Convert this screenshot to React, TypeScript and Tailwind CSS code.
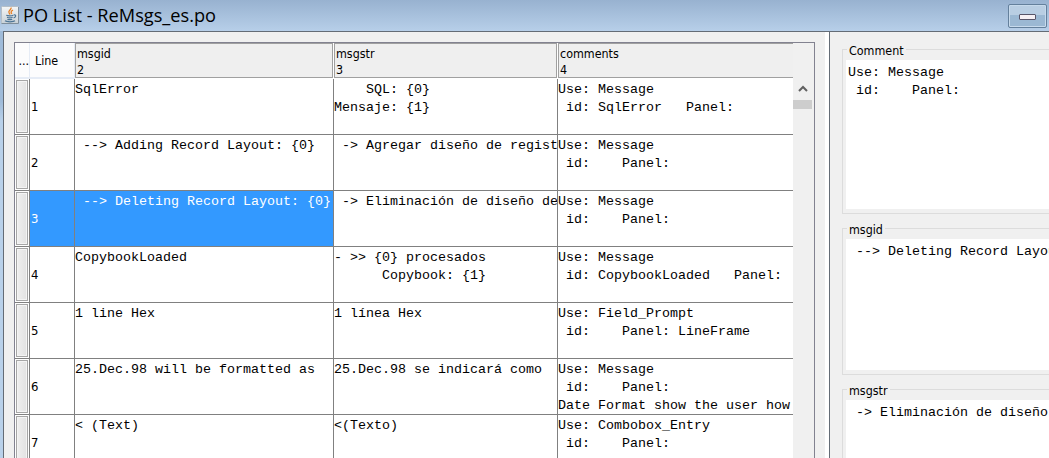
import React from "react";

type Row = { msgid: string; msgstr: string; comments: string };

const rows: Row[] = [
  { msgid: "SqlError", msgstr: "    SQL: {0}\nMensaje: {1}", comments: "Use: Message\n id: SqlError   Panel:" },
  { msgid: " --> Adding Record Layout: {0}", msgstr: " -> Agregar diseño de regist", comments: "Use: Message\n id:    Panel:" },
  { msgid: " --> Deleting Record Layout: {0}", msgstr: " -> Eliminación de diseño de", comments: "Use: Message\n id:    Panel:" },
  { msgid: "CopybookLoaded", msgstr: "- >> {0} procesados\n      Copybook: {1}", comments: "Use: Message\n id: CopybookLoaded   Panel:" },
  { msgid: "1 line Hex", msgstr: "1 línea Hex", comments: "Use: Field_Prompt\n id:    Panel: LineFrame" },
  { msgid: "25.Dec.98 will be formatted as", msgstr: "25.Dec.98 se indicará como", comments: "Use: Message\n id:    Panel:\nDate Format show the user how" },
  { msgid: "< (Text)", msgstr: "<(Texto)", comments: "Use: Combobox_Entry\n id:    Panel:" },
];

const mono = "font-['Liberation_Mono',monospace] text-[13.333px] leading-[18px] whitespace-pre";
const cols = "grid grid-cols-[15px_45px_259px_224px_235px]";
const cell = "h-full overflow-hidden border-r border-[#808080] pt-[2px]";

function JavaIcon() {
  return (
    <svg width="18" height="18" viewBox="0 0 18 18" className="shrink-0">
      <defs>
        <linearGradient id="tile" x1="0" y1="0" x2="0" y2="1">
          <stop offset="0" stopColor="#f4f6f7" />
          <stop offset="1" stopColor="#c9d1d7" />
        </linearGradient>
      </defs>
      <rect x=".5" y=".5" width="17" height="17" rx="1" fill="url(#tile)" stroke="#b4bec7" />
      <path d="M.5 17.500H17.500V1" fill="none" stroke="#7f8e9b" />
      <path d="M10 1.500c1 2.200-3.200 3-2 5.200l1 1.800M12 4.200C9.800 5.200 9.600 6.300 10.800 7.800" fill="none" stroke="#e67f24" strokeWidth="1.300" />
      <path d="M5.300 9.300c1.500.8 5.700.7 7-.1M6 11.300c1.400.6 4.200.6 5.600 0M6.400 13.200c1.200.5 3.600.5 4.800 0M4 14.800c1.500 1.300 8.500 1.300 10 0M12.700 8.900c2.800-.5 2.500 2.600-.1 3" fill="none" stroke="#4d7596" strokeWidth="1.200" />
    </svg>
  );
}

function HeaderCell({ name, index, className = "" }: { name: string; index: number; className?: string }) {
  return (
    <div className={`h-[35px] overflow-hidden border border-[#a0a0a0] bg-[#efefef] pt-[2px] pl-px leading-4 ${className}`}>
      <div>{name}</div>
      <div>{index}</div>
    </div>
  );
}

function Group({ title, text, className }: { title: string; text: string; className: string }) {
  return (
    <section className={`relative ml-3 shrink-0 border border-r-0 border-[#dcdcdc] pt-[10px] pb-1 pl-[3px] ${className}`}>
      <h2 className="absolute top-[-7px] left-1 bg-[#f0f0f0] px-[2px] leading-4">{title}</h2>
      <div className={`h-full overflow-hidden bg-white pt-1 pl-[2px] ${mono}`}>{text}</div>
    </section>
  );
}

export default function App() {
  return (
    <div className="flex h-[458px] w-[1049px] flex-col overflow-hidden bg-[#b9d1ea] font-['DejaVu_Sans_Condensed','DejaVu_Sans',sans-serif] text-[12.4px] text-black">
      <header className="flex h-[31px] shrink-0 items-start justify-between bg-gradient-to-b from-[#98b2d0] to-[#b7cfe9]">
        <div className="flex items-center pt-[5px] pl-px">
          <JavaIcon />
          <h1 className="ml-[4px] font-['Open_Sans',sans-serif] text-[18.2px] leading-[20px] whitespace-nowrap">PO List - ReMsgs_es.po</h1>
        </div>
        <button aria-label="Minimize" className="mt-1 mr-[2px] flex h-6 w-[39px] items-center justify-center rounded-[2px] border border-[#64809c] bg-linear-to-b from-[#b9cee3] from-45% to-[#9bb8d3] to-45% shadow-[inset_0_0_0_1px_#c7daec]">
          <span className="mt-[2px] block h-[6px] w-[17px] rounded-[1px] border border-[#585569] bg-[#f6f0f4]" />
        </button>
      </header>
      <div className="flex min-h-0 flex-1 bg-linear-to-b from-[#9fbbd9] from-[70px] to-[#b9d1ea] to-[90px] pl-[3px]">
        <main className="flex w-[822px] shrink-0 border-t border-l border-[#646c76] bg-[#f0f0f0] pt-[10px] pl-[10px]">
          <div className="flex h-[440px] w-[801px] shrink-0 border border-[#828290]">
            <div className="w-[778px] shrink-0 overflow-hidden bg-white">
              <div className={`${cols} h-9`}>
                <div className="flex items-center justify-end border-r border-b-2 border-[#e6ecf6] bg-[#fcfcfd] pt-[2px]">...</div>
                <div className="flex items-center border-r border-b-2 border-[#e6ecf6] bg-[#fcfcfd] pt-[3px] pl-[5px]">Line</div>
                <HeaderCell name="msgid" index={2} className="mr-px" />
                <HeaderCell name="msgstr" index={3} className="mr-px" />
                <HeaderCell name="comments" index={4} className="border-r-0" />
              </div>
              {rows.map((r, i) => {
                const sel = i === 2;
                const tone = sel ? "bg-[#3399ff] text-white" : "";
                return (
                  <div key={r.msgid} className={`${cols} h-14 border-b border-[#808080]`}>
                    <div className="border-r border-[#808080] p-px">
                      <div className="h-[53px] border border-[#a6a6a6] bg-linear-to-r from-[#efefef] to-[#e2e2e2] shadow-[inset_0_0_0_1px_#f4f4f4]" />
                    </div>
                    <div className={`flex items-center border-r border-[#808080] pt-px pl-px text-[13px] ${tone}`}>{i + 1}</div>
                    <div className={`${cell} ${mono} ${tone}`}>{r.msgid}</div>
                    <div className={`${cell} ${mono}`}>{r.msgstr}</div>
                    <div className={`h-full overflow-hidden pt-[2px] ${mono}`}>{r.comments}</div>
                  </div>
                );
              })}
            </div>
            <div className="flex flex-1 flex-col items-center bg-[#f0f0f0] pt-[42px] pr-[2px]">
              <svg width="10" height="7" viewBox="0 0 10 7">
                <path d="M1 6L5 2L9 6" fill="none" stroke="#606060" strokeWidth="2" />
              </svg>
              <div className="mt-[8px] h-[9px] w-[19px] bg-[#cdcdcd]" />
            </div>
          </div>
        </main>
        <div className="w-1 shrink-0 border-t border-[#646c76] bg-white" />
        <aside className="flex min-w-0 flex-1 flex-col overflow-hidden border-t border-l border-[#646c76] bg-[#f0f0f0] pt-[17px]">
          <Group title="Comment" text={"Use: Message\n id:    Panel:"} className="h-[165px]" />
          <Group title="msgid" text={" --> Deleting Record Layou"} className="mt-[14px] h-[147px]" />
          <Group title="msgstr" text={" -> Eliminación de diseño"} className="mt-[14px] h-[147px]" />
        </aside>
      </div>
    </div>
  );
}
